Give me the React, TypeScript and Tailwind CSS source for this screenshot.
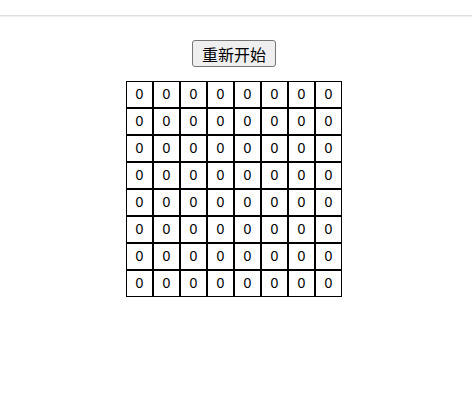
import React from 'react';

const SIZE = 8;

export default function App() {
  const board = Array.from({ length: SIZE }, () => Array.from({ length: SIZE }, () => 0));

  return (
    <div className="w-[472px] h-[416px] bg-white font-['Liberation_Sans','Noto_Sans_CJK_SC',sans-serif] text-black">
      {/* top divider */}
      <div className="pt-[15px]">
        <div className="h-px bg-[#dedede]" />
        <div className="h-px bg-[#efefef]" />
      </div>

      <div className="w-[468px] flex flex-col items-center pt-[23px]">
        <button className="h-[27px] px-[9px] text-[16px] leading-none bg-[#efefef] border border-[#767676] rounded-[3px] font-['Noto_Sans_CJK_SC',sans-serif]">
          重新开始
        </button>

        <div className="mt-[14px] flex flex-col">
          {board.map((row, r) => (
            <div key={r} className="flex">
              {row.map((v, c) => (
                <div
                  key={c}
                  className="w-[27px] h-[27px] border border-black flex items-center justify-center text-[14px] -ml-0"
                >
                  {v}
                </div>
              ))}
            </div>
          ))}
        </div>
      </div>
    </div>
  );
}
